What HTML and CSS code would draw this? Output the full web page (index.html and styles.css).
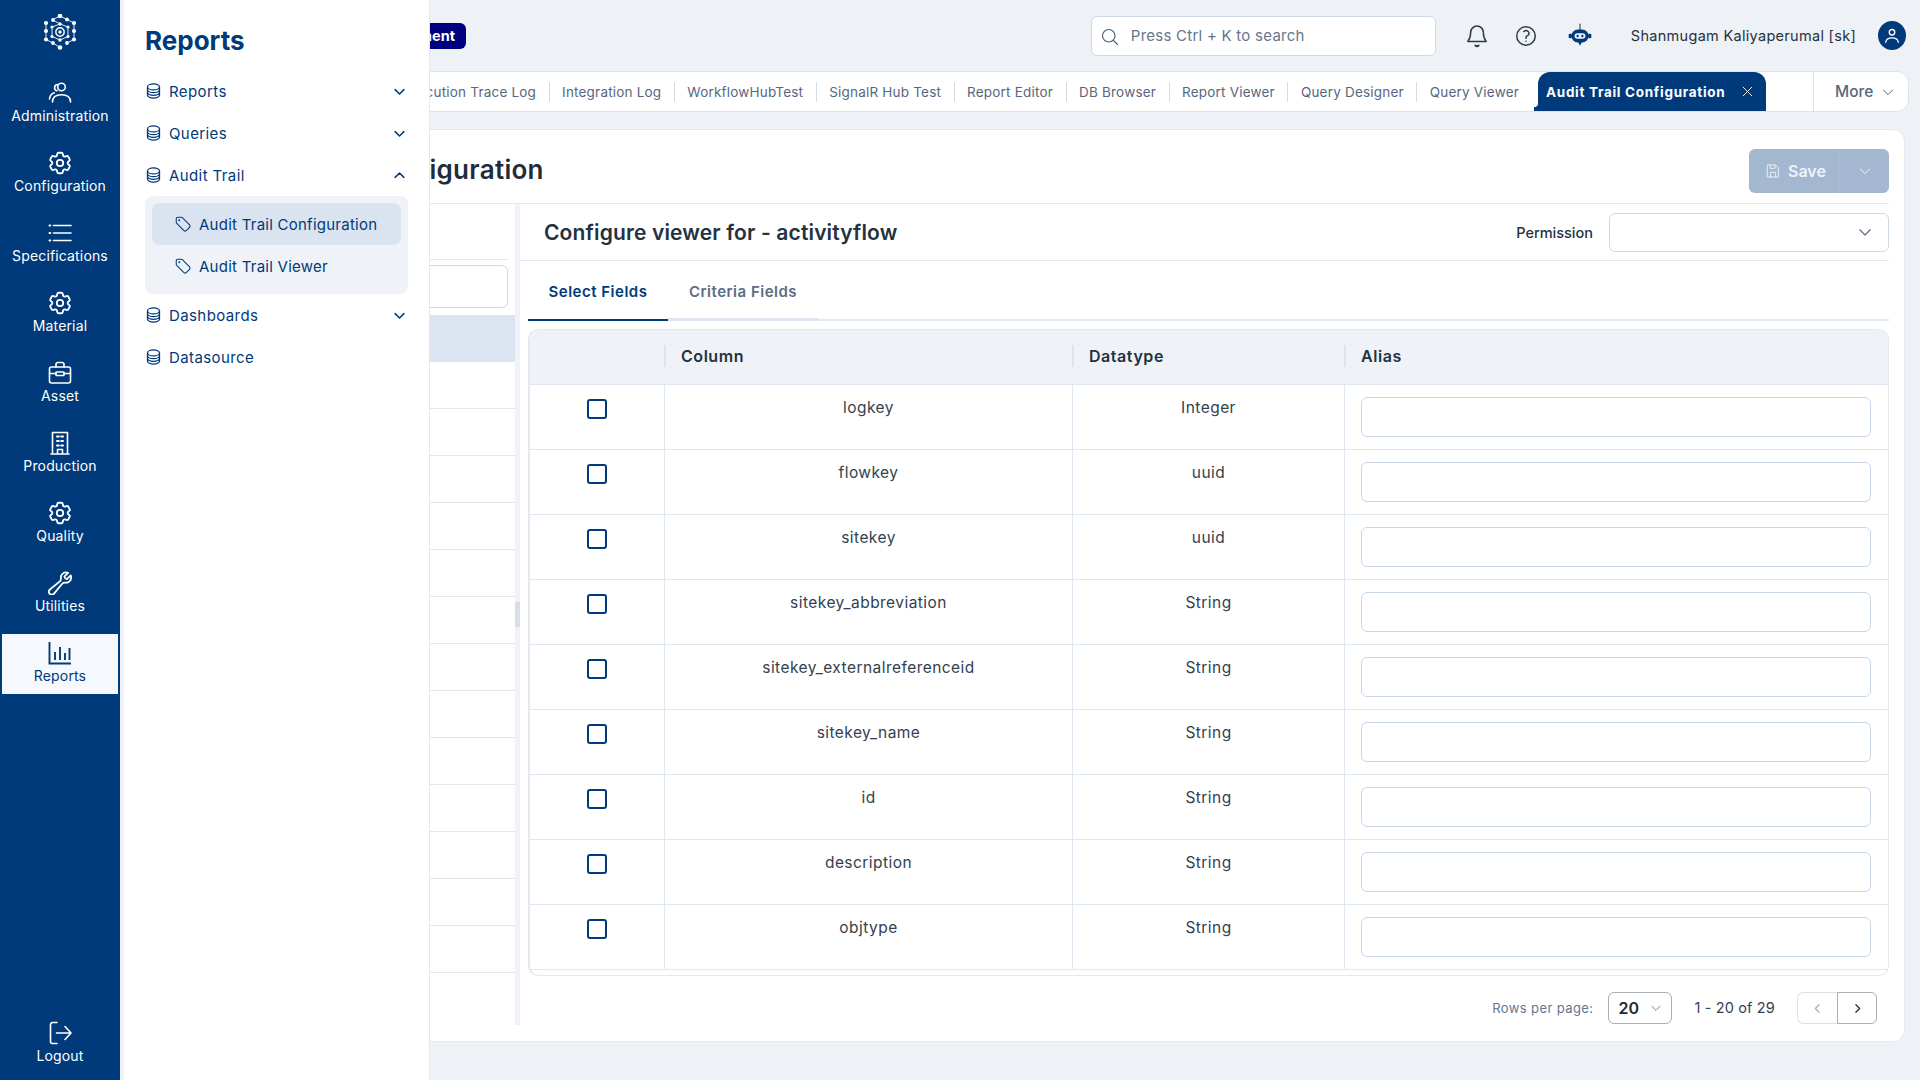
FILE: index.html
```html
<!DOCTYPE html>
<html lang="en">
<head>
<meta charset="utf-8">
<title>Audit Trail Configuration</title>
<link rel="stylesheet" href="styles.css">
</head>
<body>
<svg class="sprite" aria-hidden="true">
  <symbol id="gear" viewBox="1.500 1.500 21 21"><path d="M9.594 3.940c.090-.542.560-.940 1.110-.940h2.593c.550 0 1.020.398 1.110.940l.213 1.281c.063.374.313.686.645.870.074.040.147.083.220.127.325.196.720.257 1.075.124l1.217-.456a1.125 1.125 0 0 1 1.370.490l1.296 2.247a1.125 1.125 0 0 1-.260 1.431l-1.003.827c-.293.241-.438.613-.430.992a7.723 7.723 0 0 1 0 .255c-.008.378.137.750.430.991l1.004.827c.424.350.534.955.260 1.430l-1.298 2.247a1.125 1.125 0 0 1-1.369.491l-1.217-.456c-.355-.133-.750-.072-1.076.124a6.470 6.470 0 0 1-.220.128c-.331.183-.581.495-.644.869l-.213 1.281c-.090.543-.560.940-1.110.940h-2.594c-.550 0-1.019-.398-1.110-.940l-.213-1.281c-.062-.374-.312-.686-.644-.870a6.520 6.520 0 0 1-.220-.127c-.325-.196-.720-.257-1.076-.124l-1.217.456a1.125 1.125 0 0 1-1.369-.490l-1.297-2.247a1.125 1.125 0 0 1 .260-1.431l1.004-.827c.292-.240.437-.613.430-.991a6.932 6.932 0 0 1 0-.255c.007-.380-.138-.751-.430-.992l-1.004-.827a1.125 1.125 0 0 1-.260-1.430l1.297-2.247a1.125 1.125 0 0 1 1.370-.491l1.216.456c.356.133.751.072 1.076-.124.072-.044.146-.086.220-.128.332-.183.582-.495.644-.869l.214-1.280Z"/><circle cx="12" cy="12" r="2.800"/></symbol>
  <symbol id="db" viewBox="2.500 1 19 22"><path d="M20.250 6.375c0 2.278-3.694 4.125-8.250 4.125S3.750 8.653 3.750 6.375m16.500 0c0-2.278-3.694-4.125-8.250-4.125S3.750 4.097 3.750 6.375m16.500 0v11.250c0 2.278-3.694 4.125-8.250 4.125s-8.250-1.847-8.250-4.125V6.375m16.500 0v3.750m-16.500-3.750v3.750m16.500 0v3.750C20.250 16.153 16.556 18 12 18s-8.250-1.847-8.250-4.125v-3.750m16.500 0c0 2.278-3.694 4.125-8.250 4.125s-8.250-1.847-8.250-4.125"/></symbol>
  <symbol id="tag" viewBox="0 0 24 24"><path d="M9.568 3H5.250A2.250 2.250 0 0 0 3 5.250v4.318c0 .597.237 1.170.659 1.591l9.581 9.581c.699.699 1.780.872 2.607.330a18.095 18.095 0 0 0 5.223-5.223c.542-.827.369-1.908-.330-2.607L11.160 3.660A2.250 2.250 0 0 0 9.568 3Z"/><path d="M7 7h.008v.008H7V7Z" stroke-width="2.500"/></symbol>
  <symbol id="down" viewBox="0 0 24 24"><path d="m5 9 7 7 7-7"/></symbol>
  <symbol id="up" viewBox="0 0 24 24"><path d="m5 15 7-7 7 7"/></symbol>
</svg>

<nav class="rail">
  <div class="logo">
    <svg viewBox="-18 -18 36 36" class="logo-svg">
      <g fill="#fff" stroke="none">
        <circle cx="0" cy="-16" r="2.300"/><circle cx="0" cy="15.500" r="2.300"/>
        <circle cx="-14" cy="-9" r="2.100"/><circle cx="14" cy="-9" r="2.100"/>
        <circle cx="-14" cy="-1" r="2.100"/><circle cx="14" cy="-1" r="2.100"/>
        <circle cx="-14" cy="7.500" r="2.100"/><circle cx="14" cy="7.500" r="2.100"/>
        <circle cx="-7" cy="-12" r="1.900"/><circle cx="7" cy="-12.500" r="1.900"/>
        <circle cx="-7" cy="11" r="1.900"/><circle cx="7" cy="11" r="1.900"/>
        <circle cx="0" cy="-8" r="1.700"/><circle cx="0" cy="8" r="1.700"/>
        <circle cx="-8" cy="-5" r="1.600"/><circle cx="8" cy="-5" r="1.600"/>
        <circle cx="-8" cy="4.500" r="1.600"/><circle cx="8" cy="4.500" r="1.600"/>
        <circle cx="0" cy="0" r="1.700"/>
      </g>
      <g fill="none" stroke="#fff" stroke-width=".9">
        <circle cx="0" cy="0" r="4.200" stroke-width="1.400"/>
        <path d="M0-16l7 3.500 7 3.500M0-16l-7 3.500M-14-9v16.500M14-9v16.500M-14 7.500l7 3.500 7 4.500M14 7.500l-7 3.500M-7-12l7 4 8 3M8-5v9.500L0 8l-8-3.500V-5L0-8"/>
      </g>
    </svg>
  </div>
  <a class="rail-item">
    <svg class="rail-icon" viewBox="0 0 24 24"><circle cx="13.500" cy="6" r="3.800"/><path d="M4.500 21c0-4.600 3.400-7.200 9-7.200s9 2.600 9 7.200"/><path d="M9 9.800a3.200 3.200 0 0 1 .8-6.300M1.500 18c.3-3.400 2-5.400 4.800-6.200"/></svg>
    <span>Administration</span>
  </a>
  <a class="rail-item">
    <svg class="rail-icon"><use href="#gear"/></svg>
    <span>Configuration</span>
  </a>
  <a class="rail-item">
    <svg class="rail-icon" viewBox="0 0 24 24"><path d="M5.500 4.500H23M5.500 12H23M5.500 19.500H23"/><path d="M1.500 4.500h.8M1.500 12h.8M1.500 19.500h.8" stroke-width="2"/></svg>
    <span>Specifications</span>
  </a>
  <a class="rail-item">
    <svg class="rail-icon"><use href="#gear"/></svg>
    <span>Material</span>
  </a>
  <a class="rail-item">
    <svg class="rail-icon" viewBox="0 0 24 24"><rect x="1.500" y="6" width="21" height="16" rx="2"/><path d="M8 6V3.500a2 2 0 0 1 2-2h4a2 2 0 0 1 2 2V6M1.500 12.500H8M16 12.500h6.500"/><rect x="8" y="11" width="8" height="3.500" rx=".6"/></svg>
    <span>Asset</span>
  </a>
  <a class="rail-item">
    <svg class="rail-icon" viewBox="0 0 24 24"><path d="M4.500 23V1.500h15V23M3 23h18M9.500 23v-4.500h5V23"/><path d="M9 5.500h1.800M13.200 5.500H15M9 10h1.800M13.200 10H15M9 14.500h1.800M13.200 14.500H15" stroke-width="2"/></svg>
    <span>Production</span>
  </a>
  <a class="rail-item">
    <svg class="rail-icon"><use href="#gear"/></svg>
    <span>Quality</span>
  </a>
  <a class="rail-item">
    <svg class="rail-icon" viewBox="1.500 1 21 21"><path d="M21.750 6.750a4.500 4.500 0 0 1-4.884 4.484c-1.076-.091-2.264.071-2.950.904l-7.152 8.684a2.548 2.548 0 1 1-3.586-3.586l8.684-7.152c.833-.686.995-1.874.904-2.950a4.500 4.500 0 0 1 6.336-4.486l-3.276 3.276a3.004 3.004 0 0 0 2.250 2.250l3.276-3.276c.258.580.398 1.222.398 1.892Z"/></svg>
    <span>Utilities</span>
  </a>
  <a class="rail-item is-active">
    <svg class="rail-icon icon-chart" viewBox="0 0 24 24"><path d="M1.500 1v21.500H23"/><path d="M7 11v8M12 6v13M17 12v7M21.500 7v12"/></svg>
    <span>Reports</span>
  </a>
  <a class="rail-item rail-logout">
    <svg class="rail-icon" viewBox="0 0 24 24"><path d="M9 1.500H4.500a2 2 0 0 0-2 2v17a2 2 0 0 0 2 2H9"/><path d="M8.500 12H23M17 5.500l6 6.500-6 6.500"/></svg>
    <span>Logout</span>
  </a>
</nav>

<aside class="drawer">
  <h2 class="drawer-title">Reports</h2>
  <ul class="menu">
    <li class="menu-row"><svg class="menu-icon"><use href="#db"/></svg><span>Reports</span><svg class="menu-chev"><use href="#down"/></svg></li>
    <li class="menu-row"><svg class="menu-icon"><use href="#db"/></svg><span>Queries</span><svg class="menu-chev"><use href="#down"/></svg></li>
    <li class="menu-row"><svg class="menu-icon"><use href="#db"/></svg><span>Audit Trail</span><svg class="menu-chev"><use href="#up"/></svg></li>
    <li class="submenu">
      <div class="sub-row is-active"><svg class="sub-icon"><use href="#tag"/></svg><span>Audit Trail Configuration</span></div>
      <div class="sub-row"><svg class="sub-icon"><use href="#tag"/></svg><span>Audit Trail Viewer</span></div>
    </li>
    <li class="menu-row"><svg class="menu-icon"><use href="#db"/></svg><span>Dashboards</span><svg class="menu-chev"><use href="#down"/></svg></li>
    <li class="menu-row"><svg class="menu-icon"><use href="#db"/></svg><span>Datasource</span></li>
  </ul>
</aside>

<main class="main">
  <header class="topbar">
    <div class="badge">Development</div>
    <label class="search">
      <svg class="search-icon" viewBox="0 0 24 24"><path d="m21 21-5.197-5.197m0 0A7.500 7.500 0 1 0 5.196 5.196a7.500 7.500 0 0 0 10.607 10.607Z"/></svg>
      <span>Press Ctrl + K to search</span>
    </label>
    <svg class="top-icon bell" viewBox="0 0 24 24"><path d="M12 2a6.300 6.300 0 0 0-6.300 6.300c0 5-1.200 7-2.900 9.200h18.400c-1.700-2.200-2.900-4.200-2.900-9.200A6.300 6.300 0 0 0 12 2z"/><path d="M10.300 21.500c1 .9 2.400.9 3.400 0" stroke-width="1.800"/></svg>
    <svg class="top-icon help" viewBox="0 0 24 24"><circle cx="12" cy="12" r="9.250"/><path d="M9.879 7.519c1.171-1.025 3.071-1.025 4.242 0 1.172 1.025 1.172 2.687 0 3.712-.203.179-.430.326-.670.442-.745.361-1.450.999-1.450 1.827v.750M12 17.250h.008v.008H12v-.008Z"/></svg>
    <svg class="bot" viewBox="0 0 24 24"><path d="M12 1v5" stroke="#41597a" stroke-width="1.200"/><rect x="4" y="6" width="16" height="12" rx="6" fill="#003a7a"/><rect x="1.500" y="10" width="3" height="4" rx="1" fill="#003a7a"/><rect x="19.500" y="10" width="3" height="4" rx="1" fill="#003a7a"/><path d="M10 17h4l-2 4z" fill="#003a7a"/><rect x="7" y="9.500" width="10" height="5" rx="2.500" fill="#eef1f6"/><circle cx="9.800" cy="12" r="1.100" fill="#003a7a"/><circle cx="14.200" cy="12" r="1.100" fill="#003a7a"/></svg>
    <span class="user-name">Shanmugam Kaliyaperumal [sk]</span>
    <span class="avatar"><svg viewBox="0 0 24 24"><circle cx="12" cy="7.500" r="3.300"/><path d="M4.500 19.500c.4-3.600 3.400-5.200 7.500-5.200s7.100 1.600 7.500 5.200"/></svg></span>
  </header>

  <div class="tabbar">
    <div class="tabs">
      <a class="tab">Execution Trace Log</a>
      <a class="tab">Integration Log</a>
      <a class="tab">WorkflowHubTest</a>
      <a class="tab">SignalR Hub Test</a>
      <a class="tab">Report Editor</a>
      <a class="tab">DB Browser</a>
      <a class="tab">Report Viewer</a>
      <a class="tab">Query Designer</a>
      <a class="tab tab-last">Query Viewer</a>
      <a class="tab-active">Audit Trail Configuration<svg class="tab-x" viewBox="0 0 24 24"><path d="M4 4l16 16M20 4 4 20"/></svg></a>
    </div>
    <div class="more">More<svg class="more-chev"><use href="#down"/></svg></div>
  </div>

  <section class="card">
    <div class="card-head">
      <h1 class="page-title">Audit Trail Configuration</h1>
      <div class="save">
        <span class="save-main"><svg class="save-icon" viewBox="0 0 24 24"><path d="M4 3h12l4 4v14H4z"/><path d="M8 3v5h7V3M8 21v-7h8v7"/></svg>Save</span>
        <span class="save-drop"><svg class="save-chev"><use href="#down"/></svg></span>
      </div>
    </div>
    <div class="card-body">
      <div class="pane-left">
        <div class="pane-left-head"></div>
        <div class="pane-left-search"></div>
        <div class="list-row is-selected"></div>
        <div class="list-row"></div><div class="list-row"></div><div class="list-row"></div>
        <div class="list-row"></div><div class="list-row"></div><div class="list-row"></div>
        <div class="list-row"></div><div class="list-row"></div><div class="list-row"></div>
        <div class="list-row"></div><div class="list-row"></div><div class="list-row"></div>
        <div class="list-row"></div>
      </div>
      <div class="splitter"><span class="splitter-handle"></span></div>
      <div class="pane-right">
        <div class="viewer-head">
          <h2 class="viewer-title">Configure viewer for - activityflow</h2>
          <span class="perm-label">Permission</span>
          <div class="perm-select"><svg class="perm-chev"><use href="#down"/></svg></div>
        </div>
        <div class="subtabs">
          <a class="subtab is-active">Select Fields</a>
          <a class="subtab">Criteria Fields</a>
        </div>
        <div class="grid">
          <div class="grid-head">
            <div class="gh"></div>
            <div class="gh gh-sep">Column</div>
            <div class="gh gh-sep">Datatype</div>
            <div class="gh gh-sep">Alias</div>
          </div>
          <div class="grid-row"><div class="gc"><i class="check"></i></div><div class="gc">logkey</div><div class="gc">Integer</div><div class="gc gc-input"><i class="alias"></i></div></div>
          <div class="grid-row"><div class="gc"><i class="check"></i></div><div class="gc">flowkey</div><div class="gc">uuid</div><div class="gc gc-input"><i class="alias"></i></div></div>
          <div class="grid-row"><div class="gc"><i class="check"></i></div><div class="gc">sitekey</div><div class="gc">uuid</div><div class="gc gc-input"><i class="alias"></i></div></div>
          <div class="grid-row"><div class="gc"><i class="check"></i></div><div class="gc">sitekey_abbreviation</div><div class="gc">String</div><div class="gc gc-input"><i class="alias"></i></div></div>
          <div class="grid-row"><div class="gc"><i class="check"></i></div><div class="gc">sitekey_externalreferenceid</div><div class="gc">String</div><div class="gc gc-input"><i class="alias"></i></div></div>
          <div class="grid-row"><div class="gc"><i class="check"></i></div><div class="gc">sitekey_name</div><div class="gc">String</div><div class="gc gc-input"><i class="alias"></i></div></div>
          <div class="grid-row"><div class="gc"><i class="check"></i></div><div class="gc">id</div><div class="gc">String</div><div class="gc gc-input"><i class="alias"></i></div></div>
          <div class="grid-row"><div class="gc"><i class="check"></i></div><div class="gc">description</div><div class="gc">String</div><div class="gc gc-input"><i class="alias"></i></div></div>
          <div class="grid-row"><div class="gc"><i class="check"></i></div><div class="gc">objtype</div><div class="gc">String</div><div class="gc gc-input"><i class="alias"></i></div></div>
        </div>
        <div class="pager">
          <span class="pager-label">Rows per page:</span>
          <div class="pager-select"><b>20</b><svg class="pager-chev"><use href="#down"/></svg></div>
          <span class="pager-range">1 - 20 of 29</span>
          <div class="pager-btns">
            <span class="pager-btn is-off"><svg class="pager-arrow" viewBox="0 0 24 24"><path d="m15 5-7 7 7 7"/></svg></span>
            <span class="pager-btn"><svg class="pager-arrow" viewBox="0 0 24 24"><path d="m9 5 7 7-7 7"/></svg></span>
          </div>
        </div>
      </div>
    </div>
  </section>
</main>
</body>
</html>
```
FILE: styles.css
```css
* { box-sizing: border-box; }
html, body { margin: 0; height: 100%; }
body {
  display: flex;
  height: 1080px;
  overflow: hidden;
  position: relative;
  background: #eef1f6;
  font-family: Inter, "Noto Sans", sans-serif;
  font-size: 14px;
  color: #24323f;
}
h1, h2, ul { margin: 0; padding: 0; }
li { list-style: none; }
i { display: block; }
.sprite { display: none; }
svg { fill: none; stroke: currentColor; stroke-width: 1.5; stroke-linecap: round; stroke-linejoin: round; flex: none; }

/* rail */
.rail {
  width: 120px;
  flex: none;
  background: #003a7a;
  color: #fff;
  display: flex;
  flex-direction: column;
  align-items: center;
}
.logo { height: 70px; width: 100%; display: flex; align-items: center; justify-content: center; padding-bottom: 6px; }
.logo-svg { width: 36px; height: 36px; }
.rail-item {
  width: 116px;
  height: 70px;
  flex: none;
  display: flex;
  flex-direction: column;
  align-items: center;
  justify-content: flex-start;
  padding-top: 11px;
  gap: 1px;
  font-size: 14px;
  letter-spacing: .15px;
  line-height: 20px;
}
.rail-icon { width: 24px; height: 24px; stroke-width: 1.6; }
.icon-chart { stroke-linecap: butt; stroke-linejoin: miter; stroke-width: 1.9; }
.rail-item.is-active { background: #f5f8fc; color: #003a7a; height: 60px; padding-top: 7px; margin-top: 4px; }
.rail-logout { margin-top: auto; margin-bottom: 0; }

/* drawer */
.drawer {
  position: absolute;
  left: 120px;
  top: 0;
  bottom: 0;
  width: 310px;
  z-index: 5;
  background: #fff;
  border-left: 4px solid #eef1f6;
  border-right: 1px solid #e3e8ef;
  padding-left: 21px;
  color: #003a7a;
}
.drawer-title { font-size: 26px; line-height: 34px; font-weight: 700; padding-top: 24px; height: 70px; }
.menu { width: 263px; font-size: 15px; letter-spacing: .25px; }
.menu-row { height: 42px; display: flex; align-items: center; padding-left: 1px; letter-spacing: .4px; }
.menu-icon { width: 15px; height: 16px; stroke-width: 1.8; margin-right: 8px; }
.menu-chev { width: 15px; height: 15px; margin-left: auto; margin-right: 1px; stroke-width: 2.4; }
.submenu { height: 98px; background: #eff2f7; border-radius: 8px; padding: 7px; }
.sub-row { height: 42px; border-radius: 8px; display: flex; align-items: center; padding-left: 22px; width: 249px; }
.sub-row.is-active { background: #dae4f0; }
.sub-icon { width: 18px; height: 18px; margin-right: 7px; stroke-width: 1.4; }

/* main */
.main { flex: 1; min-width: 0; padding: 0 11px 0 16px; display: flex; flex-direction: column; }
.topbar { height: 71px; flex: none; display: flex; align-items: center; padding-right: 3px; }
.badge {
  margin-left: 200px;
  width: 130px;
  height: 26px;
  background: #00007f;
  color: #fff;
  font-weight: 700;
  font-size: 14.500px;
  line-height: 26px;
  text-align: right;
  padding-right: 11px;
  border-radius: 6px;
}
.search {
  margin-left: auto;
  width: 345px;
  height: 40px;
  background: #fff;
  border: 1px solid #cdd8e5;
  border-radius: 6px;
  display: flex;
  align-items: center;
  padding-left: 8px;
  color: #66768c;
  font-size: 15px;
  letter-spacing: .25px;
  margin-right: 29px;
}
.search-icon { width: 20px; height: 20px; margin: 3px 11px 0 0; color: #4a5a6c; stroke-width: 1.4; }
.top-icon { width: 24px; height: 24px; color: #2e3c4a; stroke-width: 1.5; }
.help { margin-left: 25px; }
.bot { width: 26px; height: 26px; margin-left: 29px; stroke: none; }
.user-name { margin-left: 38px; font-size: 14.500px; letter-spacing: .3px; color: #24323f; white-space: nowrap; }
.avatar {
  margin-left: 22px;
  width: 28px;
  height: 29px;
  background: #003a7a;
  border-radius: 50%;
  display: flex;
  align-items: center;
  justify-content: center;
  color: #fff;
}
.avatar svg { width: 20px; height: 20px; stroke-width: 1.6; }

/* tabs */
.tabbar {
  height: 41px;
  flex: none;
  background: #fff;
  border: 1px solid #dde3ec;
  border-radius: 12px;
  display: flex;
  overflow: hidden;
}
.tabs { flex: 1; min-width: 0; display: flex; justify-content: flex-end; align-items: stretch; padding-right: 47px; white-space: nowrap; }
.tab {
  flex: none;
  align-self: center;
  height: 20px;
  line-height: 20px;
  padding: 0 12.500px;
  border-right: 1px solid #d5dce6;
  color: #56677f;
  font-size: 13.500px;
  letter-spacing: .2px;
}
.tab-last { border-right: 0; padding-right: 19px; }
.tab-active {
  flex: none;
  width: 228px;
  background: #003a7a;
  color: #fff;
  font-weight: 700;
  font-size: 13.500px;
  letter-spacing: .7px;
  display: flex;
  align-items: center;
  padding-left: 8px;
  border-radius: 12px 12px 0 0;
  position: relative;
}
.tab-active::before {
  content: "";
  position: absolute;
  left: -4px;
  bottom: 0;
  width: 4px;
  height: 8px;
  background: radial-gradient(circle at 0 0, transparent 4px, #003a7a 4.500px);
}
.tab-x { width: 13px; height: 13px; margin-left: auto; margin-right: 12px; stroke-width: 1.7; }
.more {
  width: 95px;
  flex: none;
  border-left: 1px solid #dde3ec;
  display: flex;
  align-items: center;
  padding-left: 21px;
  color: #56677f;
  font-size: 15.500px;
  font-weight: 500;
}
.more-chev { width: 16px; height: 16px; margin-left: 7px; }

/* card */
.card {
  margin: 17px 4px 38px 0;
  flex: 1;
  min-height: 0;
  background: #fff;
  border: 1px solid #e3e8ef;
  border-radius: 12px;
  padding-right: 15px;
  display: flex;
  flex-direction: column;
}
.card-head {
  height: 74px;
  flex: none;
  border-bottom: 1px solid #e3e8ef;
  display: flex;
  align-items: center;
  padding-left: 92px;
}
.page-title { font-size: 26px; font-weight: 600; letter-spacing: .3px; white-space: nowrap; color: #1f2d3a; padding-top: 5px; }
.save {
  margin-left: auto;
  width: 140px;
  height: 44px;
  margin-top: 9px;
  background: #a3b7d0;
  border-radius: 6px;
  display: flex;
  color: #eef3f8;
  font-weight: 600;
  font-size: 16px;
}
.save-main { width: 91px; display: flex; align-items: center; padding-left: 16px; gap: 7px; border-right: 1px solid #aabcd3; }
.save-icon { width: 16px; height: 16px; stroke-width: 1.4; }
.save-drop { flex: 1; display: flex; align-items: center; justify-content: center; }
.save-chev { width: 16px; height: 16px; }
.card-body { flex: 1; min-height: 0; display: flex; }
.pane-left { width: 378px; flex: none; overflow: hidden; }
.pane-left-head { height: 56px; border-bottom: 1px solid #e3e8ef; margin-right: 7px; }
.pane-left-search { height: 43px; margin: 5px 7px 7px 0; border: 1px solid #cdd8e5; border-radius: 6px; }
.list-row { height: 47px; border-bottom: 1px solid #e3e8ef; }
.list-row.is-selected { background: #dbe4f0; border-bottom: 0; }
.splitter { width: 5px; flex: none; height: 821px; background: #eff2f8; display: flex; align-items: flex-start; }
.splitter-handle { display: block; width: 100%; height: 25px; margin-top: 398px; background: #d5dee9; }
.pane-right { flex: 1; min-width: 0; display: flex; flex-direction: column; }
.viewer-head {
  height: 57px;
  flex: none;
  border-bottom: 1px solid #e3e8ef;
  display: flex;
  align-items: center;
  padding-left: 24px;
}
.viewer-title { font-size: 21px; font-weight: 600; letter-spacing: .15px; color: #24323f; }
.perm-label { margin-left: auto; margin-right: 16px; font-size: 14.500px; font-weight: 500; color: #24323f; }
.perm-select {
  width: 280px;
  height: 39px;
  border: 1px solid #cdd8e5;
  border-radius: 6px;
  display: flex;
  align-items: center;
  justify-content: flex-end;
  padding-right: 14px;
  color: #56677f;
}
.perm-chev { width: 18px; height: 18px; }
.subtabs {
  height: 60px;
  flex: none;
  margin-left: 8px;
  display: flex;
  border-bottom: 2px solid #e3e9f0;
}
.subtab {
  height: 60px;
  width: 150px;
  border-bottom: 3px solid #dce5f0;
  display: flex;
  align-items: center;
  justify-content: center;
  padding-top: 3px;
  color: #5c6d84;
  font-weight: 600;
  font-size: 15px;
  letter-spacing: .5px;
}
.subtab.is-active { width: 140px; color: #003a7a; border-bottom: 2px solid #003a7a; padding-top: 2px; }
.grid {
  margin: 8px 0 0 8px;
  height: 647px;
  flex: none;
  border: 1px solid #e3e8ef;
  border-left-width: 2px;
  border-radius: 10px;
  overflow: hidden;
}
.grid-head, .grid-row { display: grid; grid-template-columns: 135px 408px 272px 1fr; }
.grid-head { height: 55px; padding-bottom: 2px; background: #eff2f7; align-items: center; border-bottom: 1px solid #e0e6ef; }
.gh { height: 22px; line-height: 22px; font-weight: 600; font-size: 16px; letter-spacing: .55px; color: #24323f; padding-left: 15px; }
.gh-sep { border-left: 2px solid #dfe4ea; margin-left: -1px; }
.grid-row { height: 65px; border-bottom: 1px solid #dfe6ef; }
.gc {
  border-right: 1px solid #dfe6ef;
  padding-top: 12px;
  line-height: 22px;
  text-align: center;
  font-size: 15.500px;
  letter-spacing: .45px;
  color: #33414f;
}
.gc:last-child { border-right: 0; }
.gc-input { padding: 12px 17px 0 16px; }
.check {
  width: 20px;
  height: 20px;
  margin: 2px auto 0;
  border: 2px solid #003a7a;
  border-radius: 3px;
}
.alias { height: 40px; border: 1px solid #c9d6e5; border-radius: 6px; }
.pager {
  flex: 1;
  display: flex;
  align-items: flex-start;
  justify-content: flex-end;
  padding: 16px 12px 0 0;
}
.pager-label { line-height: 32px; font-size: 13px; letter-spacing: .4px; color: #66768c; margin-right: 15px; }
.pager-select {
  width: 64px;
  height: 32px;
  border: 1px solid #a8aeb6;
  border-radius: 6px;
  display: flex;
  align-items: center;
  padding: 0 8px 0 9px;
  justify-content: space-between;
  font-size: 16px;
  color: #1f2a35;
}
.pager-select b { font-weight: 600; }
.pager-chev { width: 14px; height: 14px; color: #66768c; }
.pager-range { line-height: 32px; margin: 0 22px; font-size: 14.500px; letter-spacing: .15px; color: #33414f; }
.pager-btns { display: flex; }
.pager-btn {
  width: 40px;
  height: 32px;
  border: 1px solid #a8aeb6;
  border-radius: 0 6px 6px 0;
  display: flex;
  align-items: center;
  justify-content: center;
  color: #1f2a35;
}
.pager-btn.is-off { border-color: #dde1e6; border-right: 0; border-radius: 6px 0 0 6px; color: #a8aeb6; }
.pager-arrow { width: 13px; height: 13px; stroke-width: 2.2; }
```
